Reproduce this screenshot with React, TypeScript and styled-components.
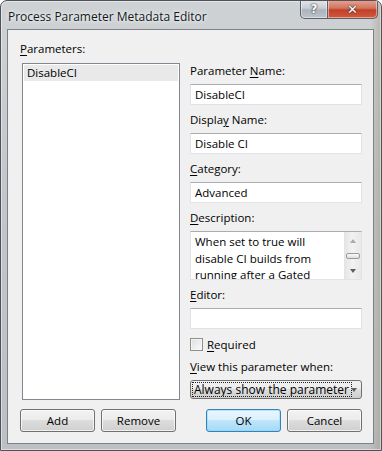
import React from 'react';
import styled, { createGlobalStyle } from 'styled-components';

const GlobalStyle = createGlobalStyle`
  body {
    margin: 0;
    background: #ffffff;
    font-family: 'Open Sans', 'Noto Sans', sans-serif;
    font-size: 11.5px;
    color: #000;
  }
`;

const Window = styled.div`
  width: 382px;
  height: 451px;
  box-sizing: border-box;
  border: 1px solid #4e535a;
  border-radius: 7px 7px 0 0;
  padding: 0 7px 6px 6px;
  display: flex;
  flex-direction: column;
  background:
    linear-gradient(90deg, rgba(255, 255, 255, 0) 97%, rgba(150, 132, 96, 0.35) 100%),
    linear-gradient(180deg, #cfd2d5 0%, #c3c7cb 40%, #bcc0c5 100%);
  box-shadow: inset 0 0 0 1px rgba(255, 255, 255, 0.45);
  overflow: hidden;
`;

const TitleBar = styled.div`
  height: 28px;
  display: flex;
  justify-content: space-between;
  align-items: flex-start;
`;

const Title = styled.div`
  padding: 7px 0 0 1px;
  font-size: 12px;
  color: #111820;
  text-shadow: 0 0 6px rgba(255, 255, 255, 0.9), 0 0 3px rgba(255, 255, 255, 0.8);
`;

const CaptionButtons = styled.div`
  display: flex;
  margin: -1px -4px 0 0;
`;

const CaptionButton = styled.div<{ $close?: boolean }>`
  height: 19px;
  width: ${(p) => (p.$close ? 50 : 28)}px;
  box-sizing: border-box;
  display: flex;
  align-items: center;
  justify-content: center;
  border: 1px solid #5b6066;
  border-top: none;
  border-left: ${(p) => (p.$close ? 'none' : '1px solid #5b6066')};
  border-radius: ${(p) => (p.$close ? '0 0 5px 0' : '0 0 0 5px')};
  color: #fff;
  font-family: 'DejaVu Sans', sans-serif;
  font-weight: bold;
  font-size: ${(p) => (p.$close ? 13 : 12)}px;
  text-shadow: 0 0 2px #333, 0 0 1px #222;
  background: ${(p) =>
    p.$close
      ? 'linear-gradient(180deg, #e8a493 0%, #d2755e 45%, #c0412a 55%, #d5573b 100%)'
      : 'linear-gradient(180deg, #e4e7ea 0%, #c9ced3 45%, #acb3ba 55%, #bcc3ca 100%)'};
  box-shadow: inset 0 0 0 1px rgba(255, 255, 255, 0.45);
`;

const Client = styled.div`
  flex: 1;
  background: #f0f0f0;
  border: 1px solid #7c8187;
  padding: 11px 11px 11px 12px;
  display: flex;
  flex-direction: column;
`;

const Main = styled.div`
  flex: 1;
  display: grid;
  grid-template-columns: 160px 172px;
  grid-template-rows: 16px 1fr;
  column-gap: 10px;
  row-gap: 6px;
`;

const Label = styled.div`
  height: 16px;
  line-height: 16px;
  white-space: nowrap;
`;

const Key = styled.span`
  text-decoration: underline;
  text-underline-offset: 2px;
`;

const ListBox = styled.div`
  grid-column: 1;
  grid-row: 2;
  margin-left: 2px;
  background: #fff;
  border: 1px solid #828790;
  padding: 1px;
`;

const ListItem = styled.div<{ $selected?: boolean }>`
  height: 16px;
  line-height: 16px;
  padding-left: 3px;
  background: ${(p) => (p.$selected ? '#e9e9e9' : 'transparent')};
`;

const Fields = styled.div`
  grid-column: 2;
  grid-row: 2;
  display: flex;
  flex-direction: column;
  gap: 7px;
`;

const Field = styled.div`
  display: flex;
  flex-direction: column;
  gap: 5px;
`;

const TextBox = styled.div<{ $tall?: boolean }>`
  height: ${(p) => (p.$tall ? 49 : 21)}px;
  box-sizing: border-box;
  background: #fff;
  border: 1px solid #e0e3e9;
  border-top-color: #abadb3;
  border-left-color: #e2e3ea;
  display: flex;
  overflow: hidden;
`;

const TextValue = styled.div`
  flex: 1;
  padding: 1px 4px 0 4px;
  line-height: 17px;
  white-space: nowrap;
`;

const Multiline = styled.div`
  flex: 1;
  padding: 2px 4px 0 4px;
  line-height: 16.5px;
  overflow: hidden;
`;

const ScrollBar = styled.div`
  width: 17px;
  display: flex;
  flex-direction: column;
  background: linear-gradient(90deg, #e4e4e4, #f2f2f2 50%, #e8e8e8);
`;

const ScrollCell = styled.div<{ $size: number }>`
  height: ${(p) => p.$size}px;
  display: flex;
  align-items: center;
  justify-content: center;
`;

const Arrow = styled.div<{ $down?: boolean; $dim?: boolean }>`
  width: 0;
  height: 0;
  border-left: 3.5px solid transparent;
  border-right: 3.5px solid transparent;
  ${(p) =>
    p.$down
      ? `border-top: 4px solid ${p.$dim ? '#a9a9a9' : '#5e5e5e'};`
      : `border-bottom: 4px solid ${p.$dim ? '#a9a9a9' : '#5e5e5e'};`}
`;

const Thumb = styled.div`
  width: 14px;
  height: 6px;
  box-sizing: border-box;
  border: 1px solid #9a9a9a;
  border-radius: 2px;
  background: linear-gradient(180deg, #fafafa, #dcdcdc);
`;

const CheckRow = styled.div`
  height: 16px;
  display: flex;
  align-items: center;
  gap: 4px;
`;

const CheckBox = styled.div`
  width: 13px;
  height: 13px;
  box-sizing: border-box;
  border: 1px solid #8e8f8f;
  background: linear-gradient(135deg, #dedede, #fbfbfb);
  box-shadow: inset 0 0 0 1px #f4f4f4;
`;

const Combo = styled.div`
  height: 19px;
  box-sizing: border-box;
  border: 1px solid #707070;
  border-radius: 3px;
  padding: 1px 4px 1px 1px;
  display: flex;
  align-items: stretch;
  background: linear-gradient(180deg, #f2f2f2 0%, #ebebeb 50%, #dddddd 50%, #cfcfcf 100%);
`;

const ComboText = styled.div`
  flex: 1;
  min-width: 0;
  border: 1px dotted #222;
  padding-left: 1px;
  line-height: 14px;
  font-size: 12px;
  white-space: nowrap;
  overflow: hidden;
`;

const ComboArrow = styled.div`
  display: flex;
  align-items: center;
  margin-left: -1px;
`;

const ButtonRow = styled.div`
  margin-top: 9px;
  display: flex;
  justify-content: space-between;
`;

const ButtonGroup = styled.div`
  display: flex;
  gap: 6px;
`;

const Button = styled.div<{ $default?: boolean }>`
  width: 75px;
  height: 23px;
  box-sizing: border-box;
  border-radius: 3px;
  display: flex;
  align-items: center;
  justify-content: center;
  border: 1px solid ${(p) => (p.$default ? '#3c7fb1' : '#707070')};
  background: ${(p) =>
    p.$default
      ? 'linear-gradient(180deg, #eaf6fd 0%, #d9f0fc 50%, #bee6fd 50%, #a7d9f5 100%)'
      : 'linear-gradient(180deg, #f2f2f2 0%, #ebebeb 50%, #dddddd 50%, #cfcfcf 100%)'};
  box-shadow: inset 0 0 0 1px ${(p) => (p.$default ? 'rgba(120, 220, 255, 0.55)' : 'rgba(255, 255, 255, 0.7)')};
`;

const App = () => {
  return (
    <>
      <GlobalStyle />
      <Window>
        <TitleBar>
          <Title>Process Parameter Metadata Editor</Title>
          <CaptionButtons>
            <CaptionButton>?</CaptionButton>
            <CaptionButton $close>✕</CaptionButton>
          </CaptionButtons>
        </TitleBar>
        <Client>
          <Main>
            <Label>
              <Key>P</Key>arameters:
            </Label>
            <ListBox>
              <ListItem $selected>DisableCI</ListItem>
            </ListBox>
            <Fields>
              <Field>
                <Label>
                  Parameter <Key>N</Key>ame:
                </Label>
                <TextBox>
                  <TextValue>DisableCI</TextValue>
                </TextBox>
              </Field>
              <Field>
                <Label>
                  Displa<Key>y</Key> Name:
                </Label>
                <TextBox>
                  <TextValue>Disable CI</TextValue>
                </TextBox>
              </Field>
              <Field>
                <Label>
                  <Key>C</Key>ategory:
                </Label>
                <TextBox>
                  <TextValue>Advanced</TextValue>
                </TextBox>
              </Field>
              <Field>
                <Label>
                  <Key>D</Key>escription:
                </Label>
                <TextBox $tall>
                  <Multiline>When set to true will disable CI builds from running after a Gated</Multiline>
                  <ScrollBar>
                    <ScrollCell $size={17}>
                      <Arrow $dim />
                    </ScrollCell>
                    <ScrollCell $size={13}>
                      <Thumb />
                    </ScrollCell>
                    <ScrollCell $size={17}>
                      <Arrow $down />
                    </ScrollCell>
                  </ScrollBar>
                </TextBox>
              </Field>
              <Field>
                <Label>
                  <Key>E</Key>ditor:
                </Label>
                <TextBox />
              </Field>
              <CheckRow>
                <CheckBox />
                <span>
                  <Key>R</Key>equired
                </span>
              </CheckRow>
              <Field>
                <Label>
                  <Key>V</Key>iew this parameter when:
                </Label>
                <Combo>
                  <ComboText>Always show the parameter</ComboText>
                  <ComboArrow>
                    <Arrow $down />
                  </ComboArrow>
                </Combo>
              </Field>
            </Fields>
          </Main>
          <ButtonRow>
            <ButtonGroup>
              <Button>Add</Button>
              <Button>Remove</Button>
            </ButtonGroup>
            <ButtonGroup>
              <Button $default>OK</Button>
              <Button>Cancel</Button>
            </ButtonGroup>
          </ButtonRow>
        </Client>
      </Window>
    </>
  );
};

export default App;
